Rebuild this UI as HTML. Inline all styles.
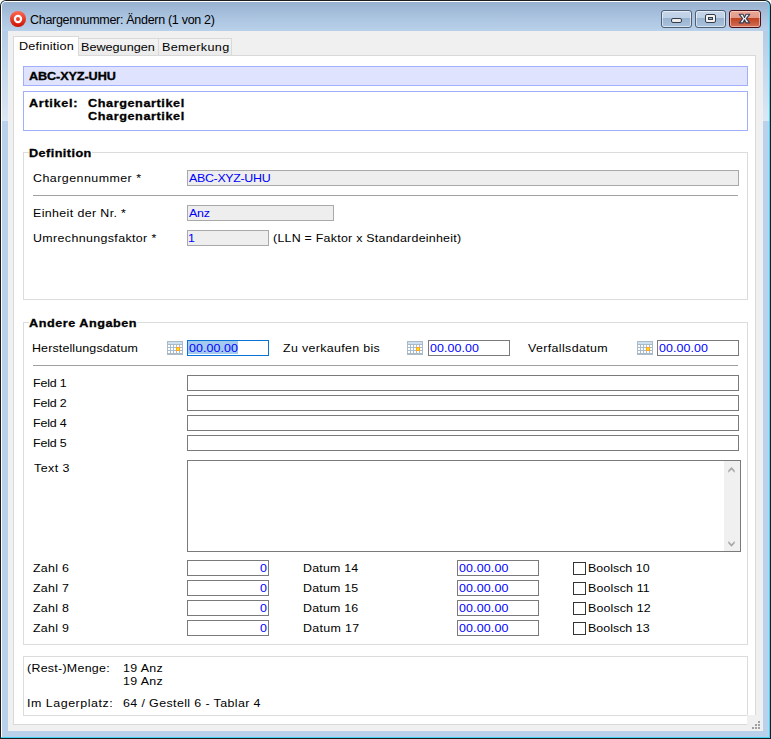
<!DOCTYPE html>
<html><head><meta charset="utf-8">
<style>
html,body{margin:0;padding:0;width:771px;height:739px;overflow:hidden;background:#fff;}
body{position:relative;font-family:"Liberation Sans", sans-serif;}
.a{position:absolute;box-sizing:border-box;}
.t{position:absolute;white-space:pre;font-family:"Liberation Sans", sans-serif;}
.fd{position:absolute;box-sizing:border-box;border:1px solid #a9a9a9;background:#eeeeee;height:16px;}
.fn{position:absolute;box-sizing:border-box;border:1px solid #7a7a7a;background:#fff;height:16px;}
.cb{position:absolute;box-sizing:border-box;border:1px solid #333;background:#fff;width:13px;height:13px;}
.gb{position:absolute;box-sizing:border-box;border:1px solid #dcdcdc;}
.sep{position:absolute;height:1px;background:#a0a0a0;}
</style></head><body>
<!-- window frame -->
<div class="a" style="left:0;top:0;width:771px;height:739px;background:#1c1c1c;border-radius:6px 6px 0 0;"></div>
<div class="a" style="left:1px;top:1px;width:769px;height:737px;background:#3fd2f2;border-radius:5px 5px 0 0;"></div>
<div class="a" style="left:1px;top:1px;width:768px;height:736px;background:#fff;border-radius:5px 5px 0 0;"></div>
<div class="a" style="left:2px;top:2px;width:767px;height:735px;border-radius:4px 4px 0 0;background:linear-gradient(#97b1cf 0px,#a9c2de 14px,#b9d1ea 29px,#b9d1ea 100%);"></div>
<div class="a" style="left:2px;top:31px;width:6px;height:90px;background:linear-gradient(#b4cce6,#dbe8f5);"></div>
<div class="a" style="left:763px;top:31px;width:6px;height:90px;background:linear-gradient(#b4cce6,#dbe8f5);"></div>
<!-- title icon -->
<svg class="a" style="left:9px;top:10px" width="18" height="18" viewBox="0 0 18 18">
<defs><linearGradient id="rg" x1="0" y1="0" x2="0" y2="1"><stop offset="0" stop-color="#ff6a55"/><stop offset="1" stop-color="#cc1000"/></linearGradient></defs>
<circle cx="9" cy="9" r="8" fill="url(#rg)"/>
<circle cx="9" cy="9" r="3.1" fill="none" stroke="#fff" stroke-width="2.2"/>
</svg>
<!-- caption buttons -->
<div class="a" style="left:661px;top:10px;width:31px;height:18px;border:1px solid #4d5d73;border-radius:3px;background:linear-gradient(#c6d6ea 0,#bdd0e6 7px,#99b3cf 7px,#a9c2de 100%);box-shadow:inset 0 0 0 1px rgba(255,255,255,0.55);"></div>
<div class="a" style="left:671px;top:18px;width:11px;height:5px;border:1px solid #343c48;border-radius:2px;background:#ececec;"></div>
<div class="a" style="left:695px;top:10px;width:31px;height:18px;border:1px solid #4d5d73;border-radius:3px;background:linear-gradient(#c6d6ea 0,#bdd0e6 7px,#99b3cf 7px,#a9c2de 100%);box-shadow:inset 0 0 0 1px rgba(255,255,255,0.55);"></div>
<div class="a" style="left:705px;top:14px;width:11px;height:9px;border:1px solid #343c48;border-radius:2px;background:#f2f2f2;"></div>
<div class="a" style="left:708px;top:17px;width:5px;height:3px;border:1px solid #343c48;background:#9ab4d0;"></div>
<div class="a" style="left:729px;top:10px;width:32px;height:18px;border:1px solid #4a1018;border-radius:3px;background:linear-gradient(#eaa898 0,#e29a88 7px,#c0401f 7px,#d27058 100%);box-shadow:inset 0 0 0 1px rgba(255,220,210,0.6);"></div>
<svg class="a" style="left:738px;top:13px" width="14" height="11" viewBox="0 0 14 11">
<path d="M1.3 1.3 L5.0 1.3 L6.5 4.4 L8.0 1.3 L11.7 1.3 L8.4 5.6 L11.7 9.9 L8.0 9.9 L6.5 6.8 L5.0 9.9 L1.3 9.9 L4.6 5.6 Z" fill="#f2f2f2" stroke="#383c52" stroke-width="1.1" stroke-linejoin="round"/>
</svg>
<!-- client -->
<div class="a" style="left:8px;top:31px;width:755px;height:700px;background:#f0f0f0;"></div>
<!-- tabs -->
<div class="a" style="left:78px;top:38px;width:81px;height:18px;border:1px solid #d9d9d9;background:linear-gradient(#f3f3f3,#ebebeb);"></div>
<div class="a" style="left:158px;top:38px;width:74px;height:18px;border:1px solid #d9d9d9;background:linear-gradient(#f3f3f3,#ebebeb);"></div>
<div class="a" style="left:13px;top:55px;width:743px;height:670px;border:1px solid #d9d9d9;background:#fff;"></div>
<div class="a" style="left:13px;top:36px;width:66px;height:20px;border:1px solid #d9d9d9;border-bottom:none;background:#fff;"></div>
<!-- header boxes -->
<div class="a" style="left:23px;top:66px;width:725px;height:20px;border:1px solid #a1affd;background:#dfe3fd;"></div>
<div class="a" style="left:23px;top:91px;width:725px;height:40px;border:1px solid #a1affd;background:#fff;"></div>
<!-- group definition -->
<div class="gb" style="left:23px;top:152px;width:725px;height:148px;"></div>
<div class="fd" style="left:187px;top:170px;width:552px;"></div>
<div class="sep" style="left:33px;top:195px;width:705px;"></div>
<div class="fd" style="left:187px;top:205px;width:147px;"></div>
<div class="fd" style="left:187px;top:230px;width:82px;"></div>
<!-- group andere -->
<div class="gb" style="left:23px;top:322px;width:725px;height:323px;"></div>
<div class="a" style="left:29px;top:318px;width:108px;height:8px;background:#fff;"></div>
<div class="a" style="left:29px;top:148px;width:63px;height:8px;background:#fff;"></div>
<svg class="a" style="left:167px;top:341px" width="16" height="14" viewBox="0 0 16 14" shape-rendering="crispEdges">
<rect x="0" y="0" width="16" height="14" fill="#a9bac9"/>
<rect x="1" y="1" width="14" height="2" fill="#cfe0f0"/>
<rect x="1" y="4" width="2" height="2" fill="#fff"/><rect x="1" y="7" width="2" height="2" fill="#fff"/><rect x="1" y="10" width="2" height="2" fill="#fff"/><rect x="4" y="4" width="2" height="2" fill="#fff"/><rect x="4" y="7" width="2" height="2" fill="#fff"/><rect x="4" y="10" width="2" height="2" fill="#fff"/><rect x="7" y="4" width="2" height="2" fill="#fff"/><rect x="7" y="7" width="2" height="2" fill="#fff"/><rect x="7" y="10" width="2" height="2" fill="#fff"/><rect x="10" y="4" width="2" height="2" fill="#fff"/><rect x="10" y="7" width="2" height="2" fill="#fff"/><rect x="10" y="10" width="2" height="2" fill="#fff"/><rect x="13" y="4" width="2" height="2" fill="#fff"/><rect x="13" y="7" width="2" height="2" fill="#fff"/><rect x="13" y="10" width="2" height="2" fill="#fff"/>
<rect x="9" y="6" width="4" height="4" fill="#ffa030"/><rect x="10" y="7" width="2" height="2" fill="#ffee00"/>
</svg>
<svg class="a" style="left:407px;top:341px" width="16" height="14" viewBox="0 0 16 14" shape-rendering="crispEdges">
<rect x="0" y="0" width="16" height="14" fill="#a9bac9"/>
<rect x="1" y="1" width="14" height="2" fill="#cfe0f0"/>
<rect x="1" y="4" width="2" height="2" fill="#fff"/><rect x="1" y="7" width="2" height="2" fill="#fff"/><rect x="1" y="10" width="2" height="2" fill="#fff"/><rect x="4" y="4" width="2" height="2" fill="#fff"/><rect x="4" y="7" width="2" height="2" fill="#fff"/><rect x="4" y="10" width="2" height="2" fill="#fff"/><rect x="7" y="4" width="2" height="2" fill="#fff"/><rect x="7" y="7" width="2" height="2" fill="#fff"/><rect x="7" y="10" width="2" height="2" fill="#fff"/><rect x="10" y="4" width="2" height="2" fill="#fff"/><rect x="10" y="7" width="2" height="2" fill="#fff"/><rect x="10" y="10" width="2" height="2" fill="#fff"/><rect x="13" y="4" width="2" height="2" fill="#fff"/><rect x="13" y="7" width="2" height="2" fill="#fff"/><rect x="13" y="10" width="2" height="2" fill="#fff"/>
<rect x="9" y="6" width="4" height="4" fill="#ffa030"/><rect x="10" y="7" width="2" height="2" fill="#ffee00"/>
</svg>
<svg class="a" style="left:637px;top:341px" width="16" height="14" viewBox="0 0 16 14" shape-rendering="crispEdges">
<rect x="0" y="0" width="16" height="14" fill="#a9bac9"/>
<rect x="1" y="1" width="14" height="2" fill="#cfe0f0"/>
<rect x="1" y="4" width="2" height="2" fill="#fff"/><rect x="1" y="7" width="2" height="2" fill="#fff"/><rect x="1" y="10" width="2" height="2" fill="#fff"/><rect x="4" y="4" width="2" height="2" fill="#fff"/><rect x="4" y="7" width="2" height="2" fill="#fff"/><rect x="4" y="10" width="2" height="2" fill="#fff"/><rect x="7" y="4" width="2" height="2" fill="#fff"/><rect x="7" y="7" width="2" height="2" fill="#fff"/><rect x="7" y="10" width="2" height="2" fill="#fff"/><rect x="10" y="4" width="2" height="2" fill="#fff"/><rect x="10" y="7" width="2" height="2" fill="#fff"/><rect x="10" y="10" width="2" height="2" fill="#fff"/><rect x="13" y="4" width="2" height="2" fill="#fff"/><rect x="13" y="7" width="2" height="2" fill="#fff"/><rect x="13" y="10" width="2" height="2" fill="#fff"/>
<rect x="9" y="6" width="4" height="4" fill="#ffa030"/><rect x="10" y="7" width="2" height="2" fill="#ffee00"/>
</svg>

<div class="a" style="left:187px;top:340px;width:82px;height:16px;border:1px solid #0a74d6;background:#fff;"></div>
<div class="a" style="left:188px;top:341px;width:50px;height:13px;background:#a4cbee;"></div>
<div class="fn" style="left:428px;top:340px;width:82px;"></div>
<div class="fn" style="left:657px;top:340px;width:82px;"></div>
<div class="sep" style="left:33px;top:365px;width:705px;"></div>
<div class="fn" style="left:187px;top:375px;width:552px;"></div>
<div class="fn" style="left:187px;top:395px;width:552px;"></div>
<div class="fn" style="left:187px;top:415px;width:552px;"></div>
<div class="fn" style="left:187px;top:435px;width:552px;"></div>
<div class="a" style="left:187px;top:460px;width:554px;height:92px;border:1px solid #7a7a7a;background:#fff;"></div>
<div class="a" style="left:724px;top:461px;width:16px;height:90px;background:#f0f0f0;"></div>
<svg class="a" style="left:727px;top:465px" width="10" height="10" viewBox="0 0 10 10"><path d="M1.3 5.5 L4.5 2 L7.7 5.5 L7.7 7.8 L4.5 4.6 L1.3 7.8 Z" fill="#a6a6a6"/></svg>
<svg class="a" style="left:727px;top:539px" width="10" height="10" viewBox="0 0 10 10"><path d="M1.3 4.3 L4.5 7.8 L7.7 4.3 L7.7 2 L4.5 5.2 L1.3 2 Z" fill="#a6a6a6"/></svg>
<div class="fn" style="left:187px;top:560px;width:82px;"></div>
<div class="fn" style="left:457px;top:560px;width:82px;"></div>
<div class="cb" style="left:573px;top:562px;"></div>
<div class="fn" style="left:187px;top:580px;width:82px;"></div>
<div class="fn" style="left:457px;top:580px;width:82px;"></div>
<div class="cb" style="left:573px;top:582px;"></div>
<div class="fn" style="left:187px;top:600px;width:82px;"></div>
<div class="fn" style="left:457px;top:600px;width:82px;"></div>
<div class="cb" style="left:573px;top:602px;"></div>
<div class="fn" style="left:187px;top:620px;width:82px;"></div>
<div class="fn" style="left:457px;top:620px;width:82px;"></div>
<div class="cb" style="left:573px;top:622px;"></div>

<!-- bottom box -->
<div class="gb" style="left:23px;top:656px;width:725px;height:60px;"></div>
<!-- size grip -->
<div class="a" style="left:747px;top:715px;width:16px;height:16px;background:#f0f0f0;"></div>
<div class="a" style="left:758px;top:721px;width:2px;height:2px;background:#a0a0a0;"></div>
<div class="a" style="left:755px;top:724px;width:2px;height:2px;background:#a0a0a0;"></div>
<div class="a" style="left:758px;top:724px;width:2px;height:2px;background:#a0a0a0;"></div>
<div class="a" style="left:752px;top:727px;width:2px;height:2px;background:#a0a0a0;"></div>
<div class="a" style="left:755px;top:727px;width:2px;height:2px;background:#a0a0a0;"></div>
<div class="a" style="left:758px;top:727px;width:2px;height:2px;background:#a0a0a0;"></div>
<div class="t" style="left:30px;top:13px;font-size:12.5px;line-height:15px;letter-spacing:-0.297px;color:#000;transform:scaleX(1.0);transform-origin:0 0;">Chargennummer: Ändern (1 von 2)</div>
<div class="t" style="left:19px;top:39px;font-size:11.5px;line-height:14px;letter-spacing:0.200px;color:#000;transform:scaleX(1.1);transform-origin:0 0;">Definition</div>
<div class="t" style="left:81px;top:40px;font-size:11.5px;line-height:14px;letter-spacing:-0.011px;color:#000;transform:scaleX(1.1);transform-origin:0 0;">Bewegungen</div>
<div class="t" style="left:162px;top:40px;font-size:11.5px;line-height:14px;letter-spacing:0.287px;color:#000;transform:scaleX(1.1);transform-origin:0 0;">Bemerkung</div>
<div class="t" style="left:29px;top:70px;font-size:11px;line-height:13px;letter-spacing:-0.090px;font-weight:bold;color:#000;-webkit-text-stroke:0.3px #000;transform:scaleX(1.15);transform-origin:0 0;">ABC-XYZ-UHU</div>
<div class="t" style="left:29px;top:97px;font-size:11px;line-height:13px;letter-spacing:0.600px;font-weight:bold;color:#000;-webkit-text-stroke:0.3px #000;transform:scaleX(1.15);transform-origin:0 0;">Artikel:</div>
<div class="t" style="left:88px;top:97px;font-size:11px;line-height:13px;letter-spacing:0.508px;font-weight:bold;color:#000;-webkit-text-stroke:0.3px #000;transform:scaleX(1.15);transform-origin:0 0;">Chargenartikel</div>
<div class="t" style="left:88px;top:110px;font-size:11px;line-height:13px;letter-spacing:0.508px;font-weight:bold;color:#000;-webkit-text-stroke:0.3px #000;transform:scaleX(1.15);transform-origin:0 0;">Chargenartikel</div>
<div class="t" style="left:29px;top:147px;font-size:11px;line-height:13px;letter-spacing:0.389px;font-weight:bold;color:#000;-webkit-text-stroke:0.3px #000;transform:scaleX(1.15);transform-origin:0 0;">Definition</div>
<div class="t" style="left:33px;top:171px;font-size:11.5px;line-height:14px;letter-spacing:0.429px;color:#000;transform:scaleX(1.08);transform-origin:0 0;">Chargennummer *</div>
<div class="t" style="left:189px;top:171px;font-size:11.5px;line-height:14px;letter-spacing:-0.300px;color:#0000ff;transform:scaleX(1.08);transform-origin:0 0;">ABC-XYZ-UHU</div>
<div class="t" style="left:33px;top:206px;font-size:11.5px;line-height:14px;letter-spacing:0.344px;color:#000;transform:scaleX(1.08);transform-origin:0 0;">Einheit der Nr. *</div>
<div class="t" style="left:189px;top:206px;font-size:11.5px;line-height:14px;letter-spacing:-0.250px;color:#0000ff;transform:scaleX(1.08);transform-origin:0 0;">Anz</div>
<div class="t" style="left:33px;top:231px;font-size:11.5px;line-height:14px;letter-spacing:0.339px;color:#000;transform:scaleX(1.08);transform-origin:0 0;">Umrechnungsfaktor *</div>
<div class="t" style="left:188px;top:231px;font-size:11.5px;line-height:14px;letter-spacing:0.000px;color:#0000ff;transform:scaleX(1.08);transform-origin:0 0;">1</div>
<div class="t" style="left:273px;top:231px;font-size:11.5px;line-height:14px;letter-spacing:0.226px;color:#000;transform:scaleX(1.08);transform-origin:0 0;">(LLN = Faktor x Standardeinheit)</div>
<div class="t" style="left:29px;top:317px;font-size:11px;line-height:13px;letter-spacing:0.454px;font-weight:bold;color:#000;-webkit-text-stroke:0.3px #000;transform:scaleX(1.15);transform-origin:0 0;">Andere Angaben</div>
<div class="t" style="left:32px;top:341px;font-size:11.5px;line-height:14px;letter-spacing:0.131px;color:#000;transform:scaleX(1.08);transform-origin:0 0;">Herstellungsdatum</div>
<div class="t" style="left:283px;top:341px;font-size:11.5px;line-height:14px;letter-spacing:0.300px;color:#000;transform:scaleX(1.08);transform-origin:0 0;">Zu verkaufen bis</div>
<div class="t" style="left:528px;top:341px;font-size:11.5px;line-height:14px;letter-spacing:0.342px;color:#000;transform:scaleX(1.08);transform-origin:0 0;">Verfallsdatum</div>
<div class="t" style="left:189px;top:341px;font-size:11.5px;line-height:14px;letter-spacing:0.071px;color:#0000ff;transform:scaleX(1.08);transform-origin:0 0;">00.00.00</div>
<div class="t" style="left:430px;top:341px;font-size:11.5px;line-height:14px;letter-spacing:0.071px;color:#0000ff;transform:scaleX(1.08);transform-origin:0 0;">00.00.00</div>
<div class="t" style="left:659px;top:341px;font-size:11.5px;line-height:14px;letter-spacing:0.071px;color:#0000ff;transform:scaleX(1.08);transform-origin:0 0;">00.00.00</div>
<div class="t" style="left:33px;top:376px;font-size:11.5px;line-height:14px;letter-spacing:-0.160px;color:#000;transform:scaleX(1.08);transform-origin:0 0;">Feld 1</div>
<div class="t" style="left:33px;top:396px;font-size:11.5px;line-height:14px;letter-spacing:-0.160px;color:#000;transform:scaleX(1.08);transform-origin:0 0;">Feld 2</div>
<div class="t" style="left:33px;top:416px;font-size:11.5px;line-height:14px;letter-spacing:-0.160px;color:#000;transform:scaleX(1.08);transform-origin:0 0;">Feld 4</div>
<div class="t" style="left:33px;top:436px;font-size:11.5px;line-height:14px;letter-spacing:-0.160px;color:#000;transform:scaleX(1.08);transform-origin:0 0;">Feld 5</div>
<div class="t" style="left:34px;top:461px;font-size:11.5px;line-height:14px;letter-spacing:0.420px;color:#000;transform:scaleX(1.08);transform-origin:0 0;">Text 3</div>
<div class="t" style="left:33px;top:561px;font-size:11.5px;line-height:14px;letter-spacing:0.240px;color:#000;transform:scaleX(1.08);transform-origin:0 0;">Zahl 6</div>
<div class="t" style="left:260px;top:561px;font-size:11.5px;line-height:14px;letter-spacing:0.000px;color:#0000ff;transform:scaleX(1.08);transform-origin:0 0;">0</div>
<div class="t" style="left:303px;top:561px;font-size:11.5px;line-height:14px;letter-spacing:0.171px;color:#000;transform:scaleX(1.08);transform-origin:0 0;">Datum 14</div>
<div class="t" style="left:459px;top:561px;font-size:11.5px;line-height:14px;letter-spacing:0.143px;color:#0000ff;transform:scaleX(1.08);transform-origin:0 0;">00.00.00</div>
<div class="t" style="left:588px;top:561px;font-size:11.5px;line-height:14px;letter-spacing:0.011px;color:#000;transform:scaleX(1.08);transform-origin:0 0;">Boolsch 10</div>
<div class="t" style="left:33px;top:581px;font-size:11.5px;line-height:14px;letter-spacing:0.240px;color:#000;transform:scaleX(1.08);transform-origin:0 0;">Zahl 7</div>
<div class="t" style="left:260px;top:581px;font-size:11.5px;line-height:14px;letter-spacing:0.000px;color:#0000ff;transform:scaleX(1.08);transform-origin:0 0;">0</div>
<div class="t" style="left:303px;top:581px;font-size:11.5px;line-height:14px;letter-spacing:0.171px;color:#000;transform:scaleX(1.08);transform-origin:0 0;">Datum 15</div>
<div class="t" style="left:459px;top:581px;font-size:11.5px;line-height:14px;letter-spacing:0.143px;color:#0000ff;transform:scaleX(1.08);transform-origin:0 0;">00.00.00</div>
<div class="t" style="left:588px;top:581px;font-size:11.5px;line-height:14px;letter-spacing:0.122px;color:#000;transform:scaleX(1.08);transform-origin:0 0;">Boolsch 11</div>
<div class="t" style="left:33px;top:601px;font-size:11.5px;line-height:14px;letter-spacing:0.240px;color:#000;transform:scaleX(1.08);transform-origin:0 0;">Zahl 8</div>
<div class="t" style="left:260px;top:601px;font-size:11.5px;line-height:14px;letter-spacing:0.000px;color:#0000ff;transform:scaleX(1.08);transform-origin:0 0;">0</div>
<div class="t" style="left:303px;top:601px;font-size:11.5px;line-height:14px;letter-spacing:0.171px;color:#000;transform:scaleX(1.08);transform-origin:0 0;">Datum 16</div>
<div class="t" style="left:459px;top:601px;font-size:11.5px;line-height:14px;letter-spacing:0.143px;color:#0000ff;transform:scaleX(1.08);transform-origin:0 0;">00.00.00</div>
<div class="t" style="left:588px;top:601px;font-size:11.5px;line-height:14px;letter-spacing:0.122px;color:#000;transform:scaleX(1.08);transform-origin:0 0;">Boolsch 12</div>
<div class="t" style="left:33px;top:621px;font-size:11.5px;line-height:14px;letter-spacing:0.240px;color:#000;transform:scaleX(1.08);transform-origin:0 0;">Zahl 9</div>
<div class="t" style="left:260px;top:621px;font-size:11.5px;line-height:14px;letter-spacing:0.000px;color:#0000ff;transform:scaleX(1.08);transform-origin:0 0;">0</div>
<div class="t" style="left:303px;top:621px;font-size:11.5px;line-height:14px;letter-spacing:0.314px;color:#000;transform:scaleX(1.08);transform-origin:0 0;">Datum 17</div>
<div class="t" style="left:459px;top:621px;font-size:11.5px;line-height:14px;letter-spacing:0.143px;color:#0000ff;transform:scaleX(1.08);transform-origin:0 0;">00.00.00</div>
<div class="t" style="left:588px;top:621px;font-size:11.5px;line-height:14px;letter-spacing:0.011px;color:#000;transform:scaleX(1.08);transform-origin:0 0;">Boolsch 13</div>
<div class="t" style="left:27px;top:661px;font-size:11.5px;line-height:14px;letter-spacing:0.250px;color:#000;transform:scaleX(1.08);transform-origin:0 0;">(Rest-)Menge:</div>
<div class="t" style="left:123px;top:661px;font-size:11.5px;line-height:14px;letter-spacing:0.340px;color:#000;transform:scaleX(1.08);transform-origin:0 0;">19 Anz</div>
<div class="t" style="left:123px;top:674px;font-size:11.5px;line-height:14px;letter-spacing:0.340px;color:#000;transform:scaleX(1.08);transform-origin:0 0;">19 Anz</div>
<div class="t" style="left:27px;top:696px;font-size:11.5px;line-height:14px;letter-spacing:0.492px;color:#000;transform:scaleX(1.08);transform-origin:0 0;">Im Lagerplatz:</div>
<div class="t" style="left:123px;top:696px;font-size:11.5px;line-height:14px;letter-spacing:0.358px;color:#000;transform:scaleX(1.08);transform-origin:0 0;">64 / Gestell 6 - Tablar 4</div>
</body></html>
